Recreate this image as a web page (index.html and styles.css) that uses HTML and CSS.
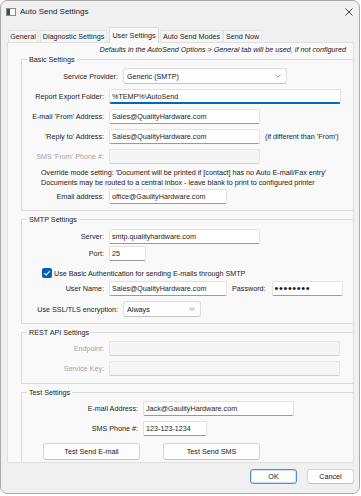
FILE: index.html
```html
<!DOCTYPE html>
<html>
<head>
<meta charset="utf-8">
<title>Auto Send Settings</title>
<link rel="stylesheet" href="styles.css">
</head>
<body>
<div class="window">
  <div class="titlebar">
    <svg class="app-icon" width="10" height="8" viewBox="0 0 10 8">
      <rect x="0.5" y="0.5" width="9" height="7" fill="#ffffff" stroke="#8a8a8a" stroke-width="1"/>
      <rect x="1" y="1" width="3" height="6" fill="#1d5e57"/>
    </svg>
    <span class="title">Auto Send Settings</span>
    <svg class="close" width="8" height="8" viewBox="0 0 8 8">
      <path d="M0.5 0.5 L7.5 7.5 M7.5 0.5 L0.5 7.5" stroke="#2a2a2a" stroke-width="0.9" fill="none"/>
    </svg>
  </div>

  <div class="tabs">
    <div class="tab t-general">General</div>
    <div class="tab t-diag">Diagnostic Settings</div>
    <div class="tab t-user active">User Settings</div>
    <div class="tab t-modes">Auto Send Modes</div>
    <div class="tab t-now">Send Now</div>
  </div>

  <div class="panel">
    <div class="hint">Defaults in the AutoSend Options &gt; General tab will be used, if not configured</div>

    <div class="group g-basic">
      <div class="gtitle">Basic Settings</div>
      <div class="row r-first tall">
        <span class="lbl lbl-wide">Service Provider:</span>
        <div class="select w-provider"><span class="val">Generic (SMTP)</span>
          <svg class="chev" width="6" height="4" viewBox="0 0 6 4"><path d="M0.5 0.8 L3 3.2 L5.5 0.8" stroke="#777" stroke-width="0.8" fill="none"/></svg>
        </div>
      </div>
      <div class="row">
        <span class="lbl">Report Export Folder:</span>
        <div class="input focused w-long">%TEMP%\AutoSend</div>
      </div>
      <div class="row">
        <span class="lbl">E-mail 'From' Address:</span>
        <div class="input w-mid">Sales@QualityHardware.com</div>
      </div>
      <div class="row">
        <span class="lbl">'Reply to' Address:</span>
        <div class="input w-mid">Sales@QualityHardware.com</div>
        <span class="aside">(if different than 'From')</span>
      </div>
      <div class="row">
        <span class="lbl disabled">SMS 'From' Phone #:</span>
        <div class="input disabled-box w-mid"></div>
      </div>
      <div class="note">
        <div>Override mode setting: 'Document will be printed if [contact] has no Auto E-mail/Fax entry'</div>
        <div>Documents may be routed to a central inbox - leave blank to print to configured printer</div>
      </div>
      <div class="row r-email">
        <span class="lbl">Email address:</span>
        <div class="input w-short">office@GaulityHardware.com</div>
      </div>
    </div>

    <div class="group g-smtp">
      <div class="gtitle">SMTP Settings</div>
      <div class="row r-first">
        <span class="lbl">Server:</span>
        <div class="input w-mid">smtp.qualityhardware.com</div>
      </div>
      <div class="row r-port">
        <span class="lbl">Port:</span>
        <div class="input w-port">25</div>
      </div>
      <div class="check-row">
        <span class="checkbox">
          <svg width="10" height="10" viewBox="0 0 10 10"><path d="M2.3 5.2 L4.2 7 L7.8 3.1" stroke="#ffffff" stroke-width="1.1" fill="none"/></svg>
        </span>
        <span>Use Basic Authentication for sending E-mails through SMTP</span>
      </div>
      <div class="row r-user">
        <span class="lbl">User Name:</span>
        <div class="input w-short">Sales@QualityHardware.com</div>
        <span class="pw-lbl">Password:</span>
        <div class="input w-pw"><span class="dots">&#8226;&#8226;&#8226;&#8226;&#8226;&#8226;&#8226;&#8226;</span></div>
      </div>
      <div class="row tall">
        <span class="lbl lbl-wide">Use SSL/TLS encryption:</span>
        <div class="select w-ssl"><span class="val">Always</span>
          <svg class="chev" width="6" height="4" viewBox="0 0 6 4"><path d="M0.5 0.8 L3 3.2 L5.5 0.8" stroke="#777" stroke-width="0.8" fill="none"/></svg>
        </div>
      </div>
    </div>

    <div class="group g-rest">
      <div class="gtitle">REST API Settings</div>
      <div class="row r-first">
        <span class="lbl disabled">Endpoint:</span>
        <div class="input disabled-box w-long2"></div>
      </div>
      <div class="row">
        <span class="lbl disabled">Service Key:</span>
        <div class="input disabled-box w-long2"></div>
      </div>
    </div>

    <div class="group g-test">
      <div class="gtitle">Test Settings</div>
      <div class="row r-first">
        <span class="lbl lbl-test">E-mail Address:</span>
        <div class="input w-mid">Jack@GaulityHardware.com</div>
      </div>
      <div class="row">
        <span class="lbl lbl-test">SMS Phone #:</span>
        <div class="input w-phone">123-123-1234</div>
      </div>
      <div class="test-buttons">
        <div class="btn btn-test">Test Send E-mail</div>
        <div class="btn btn-test">Test Send SMS</div>
      </div>
    </div>
  </div>

  <div class="footer">
    <div class="btn btn-dlg btn-default">OK</div>
    <div class="btn btn-dlg">Cancel</div>
  </div>
</div>
</body>
</html>
```

FILE: styles.css
```css
* { box-sizing: border-box; }

html, body {
  margin: 0;
  padding: 0;
  background: #ffffff;
}

body {
  font-family: "Liberation Sans", Arial, sans-serif;
  font-size: 7.2px;
  color: #1b1b1b;
}

.window {
  width: 360px;
  height: 494px;
  border: 1px solid #aaaaaa;
  border-radius: 7px;
  background: #f0f0f0;
  overflow: hidden;
  display: flex;
  flex-direction: column;
}

/* Title bar */
.titlebar {
  height: 21px;
  display: flex;
  align-items: center;
  padding-left: 5px;
  padding-right: 6px;
  flex-shrink: 0;
}
.app-icon { margin-right: 4px; }
.title { font-size: 8px; color: #1a1a1a; flex: 1; }
.close { margin-top: 0; }

/* Tabs */
.tabs {
  display: flex;
  align-items: flex-end;
  height: 16px;
  margin-top: 5px;
  margin-bottom: -1px;
  padding-left: 7px;
  position: relative;
  z-index: 1;
  flex-shrink: 0;
}
.tab {
  height: 12px;
  margin-bottom: 1px;
  display: flex;
  align-items: center;
  justify-content: center;
  background: #f5f5f5;
  border: 1px solid #e6e6e6;
  border-bottom: none;
  color: #1b1b1b;
  white-space: nowrap;
}
.tab.active {
  height: 16px;
  margin-bottom: 0;
  background: #f9f9f9;
  border-color: #dcdcdc;
  padding-bottom: 1px;
}
.t-general { width: 30px; margin-right: 2px; }
.t-diag { width: 67px; margin-right: 2px; }
.t-user { width: 50px; margin-right: 1px; }
.t-modes { width: 63px; }
.t-now { width: 39px; }

/* Panel */
.panel {
  margin-left: 6px;
  width: 347px;
  height: 421px;
  flex-shrink: 0;
  background: #f9f9f9;
  border: 1px solid #e0e0e0;
  overflow: hidden;
}
.hint {
  margin-top: 2px;
  line-height: 10px;
  height: 10px;
  text-align: right;
  padding-right: 7px;
  font-style: italic;
  color: #1b1b1b;
}

/* Group boxes */
.group {
  margin-left: 13px;
  width: 333px;
  border: 1px solid #dcdcdc;
  margin-top: 8px;
}
.g-basic { margin-top: 4px; padding-bottom: 6px; }
.g-smtp { padding-bottom: 6px; }
.g-rest { padding-bottom: 7px; }
.g-test { padding-bottom: 12px; }

.gtitle {
  display: table;
  margin-top: -5px;
  margin-left: 5px;
  height: 9px;
  line-height: 9px;
  padding: 0 2px;
  background: #f9f9f9;
  color: #1b1b1b;
}

/* Rows */
.row {
  display: flex;
  align-items: center;
  height: 15px;
  margin-top: 5px;
}
.row.tall { height: 16px; }
.row.r-first { margin-top: 5px; }
.g-basic .row.r-first { margin-top: 4px; }
.g-rest .row.r-first,
.g-test .row.r-first { margin-top: 4px; }
.row.r-email { margin-top: 1px; }
.row.r-port { margin-top: 2px; }
.row.r-user { margin-top: 3px; }

.lbl {
  width: 82px;
  margin-right: 5px;
  text-align: right;
  white-space: nowrap;
  flex-shrink: 0;
}
.lbl-wide { width: 96px; }
.lbl-test { width: 116px; }
.lbl.disabled { color: #a3a3a3; }

.aside { margin-left: 5px; white-space: nowrap; }
.pw-lbl { margin-left: 5px; margin-right: 6px; white-space: nowrap; }

.input {
  height: 15px;
  background: #ffffff;
  border: 1px solid #e2e2e2;
  border-bottom-color: #9a9a9a;
  border-radius: 2px;
  padding-left: 2px;
  display: flex;
  align-items: center;
  white-space: nowrap;
  overflow: hidden;
  flex-shrink: 0;
}
.input.focused {
  border-bottom: 1px solid #0067c0;
  box-shadow: inset 0 -1px 0 #0067c0;
}
.input.disabled-box {
  background: #f5f5f5;
  border-color: #e6e6e6;
  border-bottom-color: #cfcfcf;
}

.w-long { width: 232px; }
.w-long2 { width: 231px; }
.w-mid { width: 151px; }
.w-short { width: 118px; }
.w-port { width: 37px; }
.w-pw { width: 71px; }
.w-phone { width: 64px; }

.dots {
  font-size: 11px;
  letter-spacing: 0.6px;
  line-height: 11px;
  color: #1b1b1b;
}

.select {
  height: 16px;
  background: #fdfdfd;
  border: 1px solid #dedede;
  border-bottom-color: #c4c4c4;
  border-radius: 3px;
  padding: 0 5px 0 3px;
  display: flex;
  align-items: center;
  justify-content: space-between;
  flex-shrink: 0;
}
.w-provider { width: 164px; }
.w-ssl { width: 78px; }

.note {
  margin-left: 19px;
  margin-top: 4px;
  line-height: 10px;
  white-space: nowrap;
}

.check-row {
  display: flex;
  align-items: center;
  height: 10px;
  margin-top: 7px;
  margin-left: 20px;
}
.checkbox {
  width: 10px;
  height: 10px;
  border-radius: 2px;
  background: #005fb8;
  display: flex;
  margin-right: 2px;
}

/* Buttons */
.btn {
  background: #fdfdfd;
  border: 1px solid #d6d6d6;
  border-bottom-color: #c2c2c2;
  border-radius: 3px;
  display: flex;
  align-items: center;
  justify-content: center;
  white-space: nowrap;
  color: #1b1b1b;
}
.test-buttons {
  display: flex;
  margin-top: 7px;
  margin-left: 21px;
  gap: 23px;
}
.btn-test { width: 97px; height: 17px; }

.footer {
  display: flex;
  justify-content: flex-end;
  gap: 10px;
  margin-top: 6px;
  padding-right: 5px;
}
.btn-dlg { width: 47px; height: 15px; }
.btn-default {
  border: 1px solid #4f8fd6;
  box-shadow: inset 0 0 0 0.5px #9cc3ef;
}
```
